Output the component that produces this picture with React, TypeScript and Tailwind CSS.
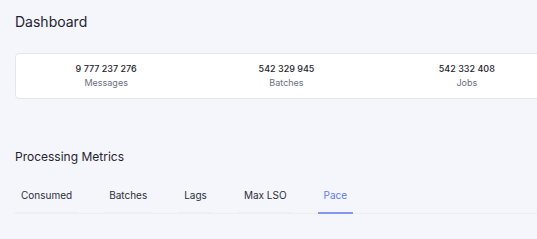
import React from 'react';

const stats = [
  { value: '9 777 237 276', label: 'Messages' },
  { value: '542 329 945', label: 'Batches' },
  { value: '542 332 408', label: 'Jobs' },
];

const tabs = ['Consumed', 'Batches', 'Lags', 'Max LSO', 'Pace'];

const App: React.FC = () => {
  const active = 'Pace';

  return (
    <div
      className="w-[537px] h-[239px] overflow-hidden bg-[#f5f6fc] text-[#1f2330]"
      style={{ fontFamily: 'Inter, "Noto Sans", sans-serif' }}
    >
      <div className="pl-[15px] pt-[12px]">
        <h1 className="text-[14px] leading-[20px] font-normal">Dashboard</h1>

        {/* Summary card */}
        <div className="mt-[21px] w-[543px] h-[46px] flex bg-white border border-[#e4e6ee] rounded-[4px]">
          {stats.map(s => (
            <div key={s.label} className="flex-1 flex flex-col items-center justify-center">
              <div className="text-[9px] leading-[14px] font-medium text-[#1f2330]">{s.value}</div>
              <div className="text-[9px] leading-[14px] text-[#6b7080]">{s.label}</div>
            </div>
          ))}
        </div>

        <h2 className="mt-[49px] text-[12px] leading-[18px] font-normal">Processing Metrics</h2>

        {/* Tabs */}
        <div className="mt-[22px] flex gap-[25px] border-b border-[#eceef4]">
          {tabs.map(t => (
            <div
              key={t}
              className={
                t === active
                  ? 'px-[6px] pb-[10px] text-[10px] leading-[14px] text-[#5b7cf5] border-b-2 border-[#7f98f5] -mb-px'
                  : 'px-[6px] pb-[10px] text-[10px] leading-[14px] text-[#2a2e3a] border-b-2 border-[#eceef4] -mb-px'
              }
            >
              {t}
            </div>
          ))}
        </div>
      </div>
    </div>
  );
};

export default App;
